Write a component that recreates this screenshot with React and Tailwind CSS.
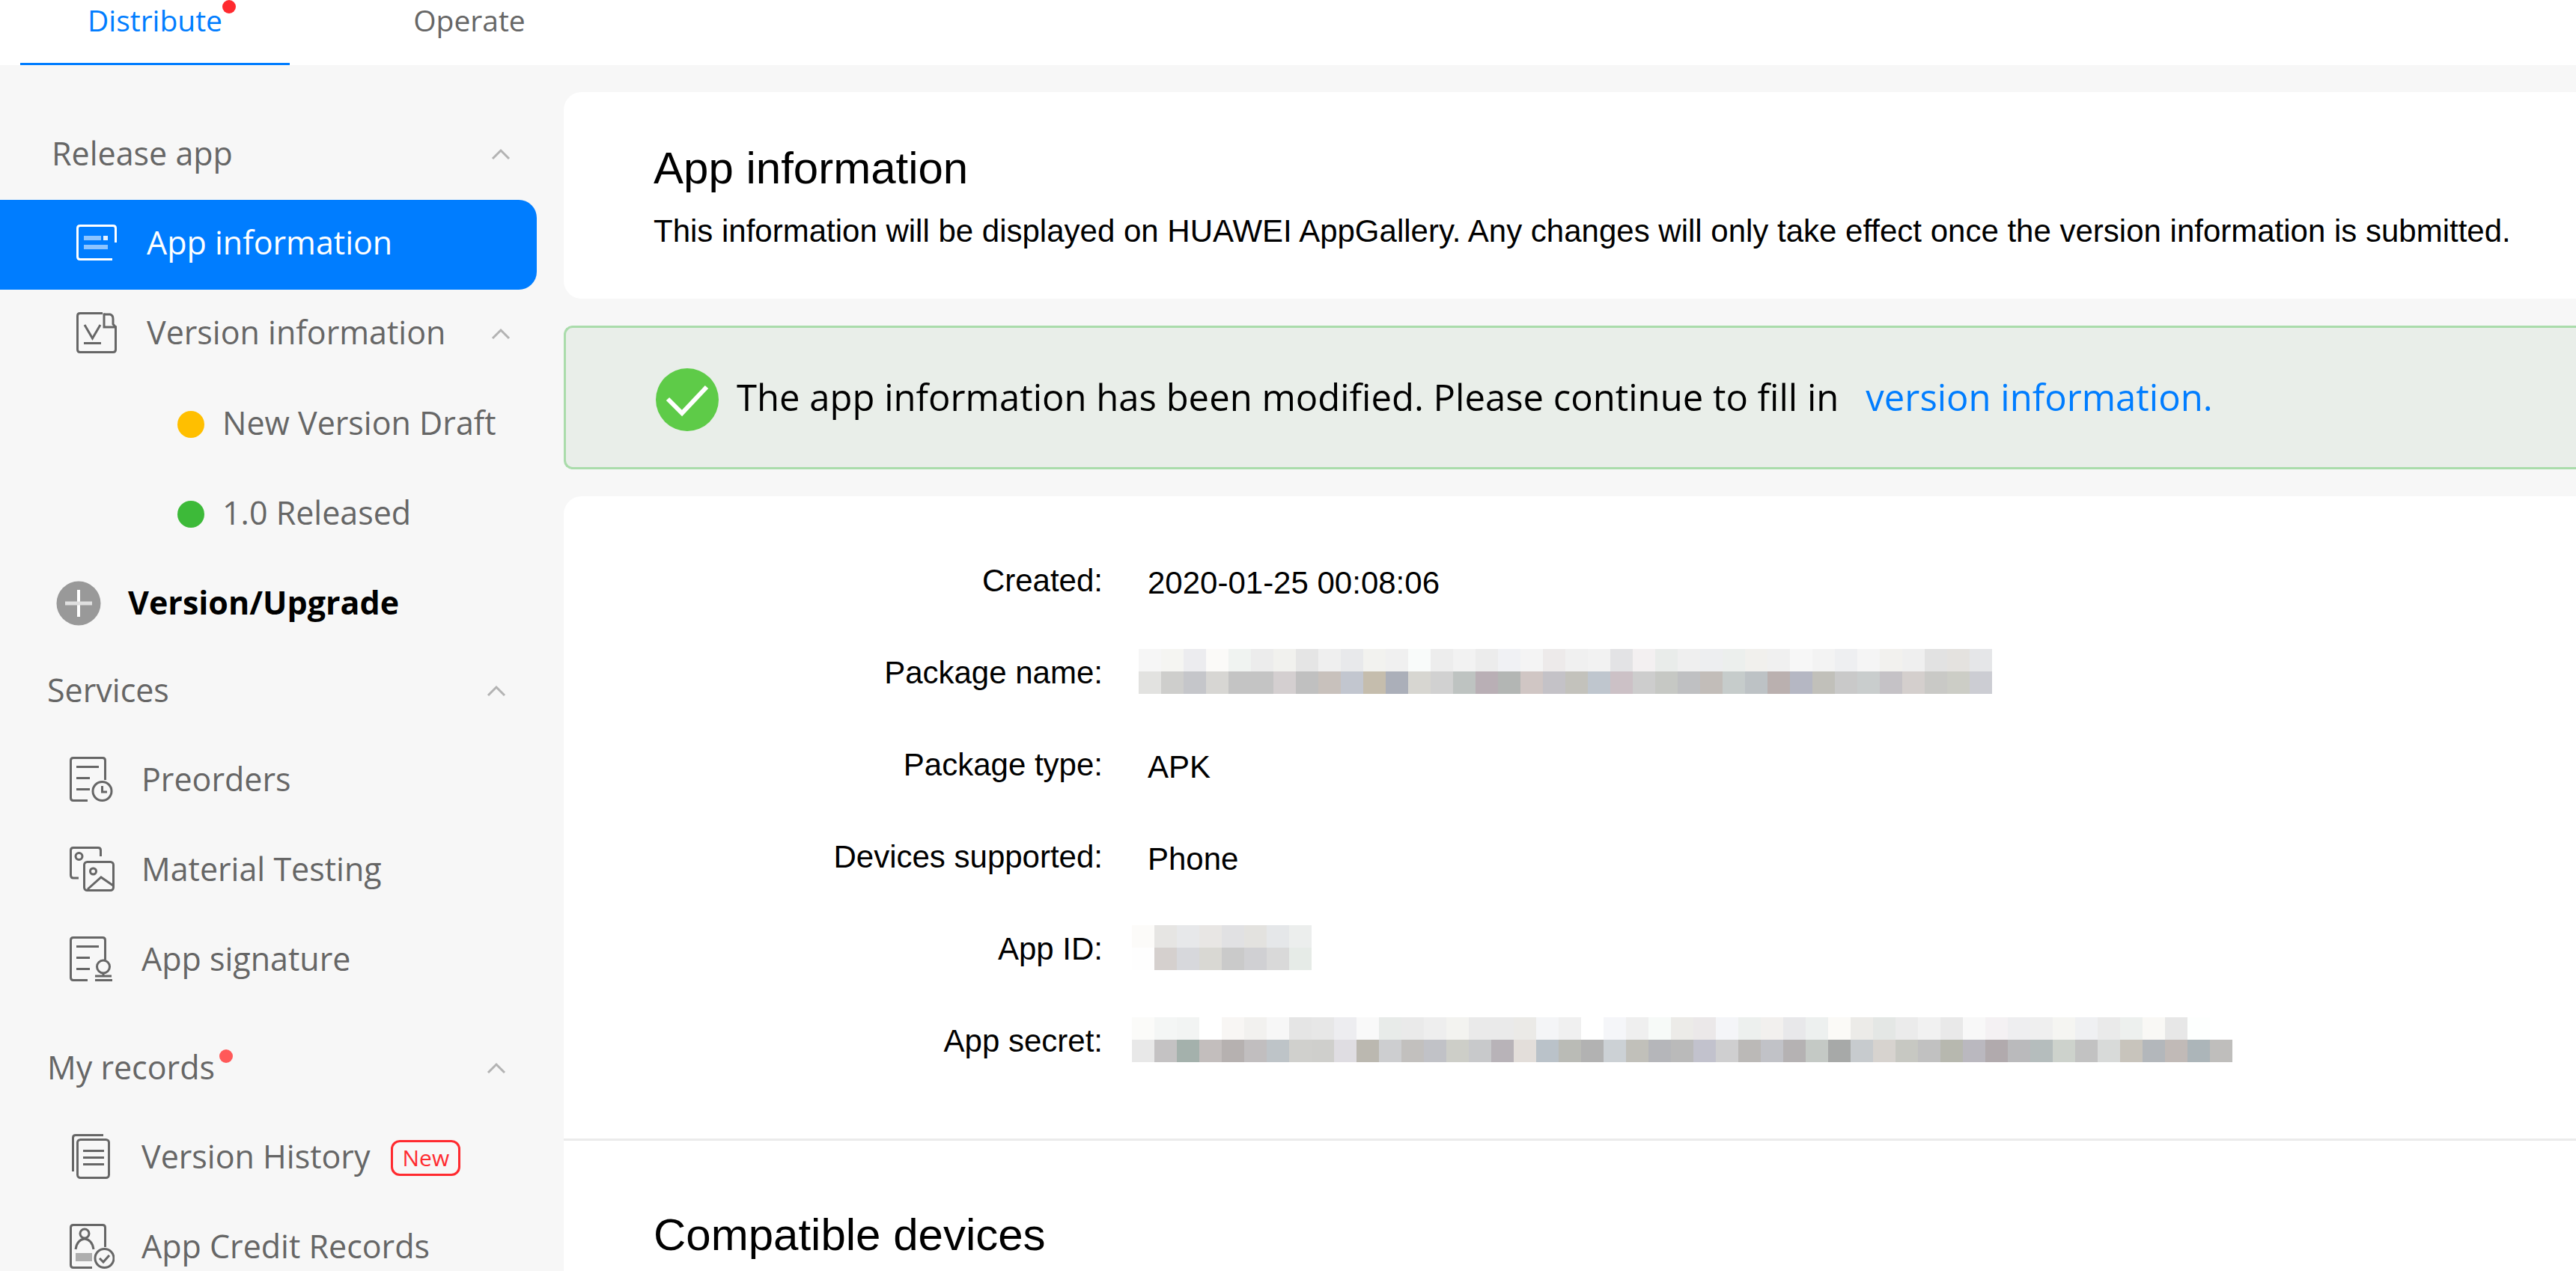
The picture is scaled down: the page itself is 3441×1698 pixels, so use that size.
const sans = "font-['Open_Sans','Noto_Sans',sans-serif]";

function Chevron() {
  return (
    <svg className="h-[30px] w-[30px] shrink-0" viewBox="0 0 30 30" fill="none" stroke="#b3b3b3" strokeWidth="3" aria-hidden="true">
      <path d="M4 20 L15 9 L26 20" />
    </svg>
  );
}

function Icon({ name }) {
  const doc = <path d="M24 58.5 H5 Q1.500 58.500 1.500 55 V5 Q1.500 1.500 5 1.500 H44 Q47.500 1.500 47.500 5 V31" />;
  const lines = <path d="M9 13.500 H39 M9 28.500 H27 M9 43.500 H27" />;
  const art = {
    info: (
      <>
        <path d="M48 52.500 H5 Q1.500 52.500 1.500 49 V11 Q1.500 7.500 5 7.500 H49 Q52.500 7.500 52.500 11 V30" />
        <path d="M10 24 H33 M10 36 H42" strokeWidth="6" opacity=".55" />
        <path d="M36 24 H42" strokeWidth="6" opacity=".9" />
      </>
    ),
    version: (
      <>
        <path d="M35 4.500 H5 Q1.500 4.500 1.500 8 V53 Q1.500 56.500 5 56.500 H49 Q52.500 56.500 52.500 53 V23 H37 V4.500" />
        <path d="M37 6 H45 Q49 7 49 12 V19 L52.500 23" />
        <path d="M11 20 L21.500 38 L32 20 M10 44.500 H33" />
      </>
    ),
    preorder: (
      <>
        {doc}
        {lines}
        <circle cx="43.500" cy="46" r="12.500" />
        <path d="M43.500 39 V47 H50" />
      </>
    ),
    material: (
      <>
        <path d="M12 42 H5 Q1.500 42 1.500 38 V5 Q1.500 1.500 5 1.500 H38 Q41.500 1.500 41.500 5 V13" />
        <circle cx="12.500" cy="13" r="4.500" />
        <rect x="19.500" y="20.500" width="39" height="38" rx="4" />
        <circle cx="31.500" cy="33" r="4" />
        <path d="M24 57 L42 41 L58 52" />
      </>
    ),
    signature: (
      <>
        {doc}
        {lines}
        <circle cx="45" cy="40.500" r="8.500" />
        <path d="M45 49 V53 M34 53 H56 M34 58.500 H57" />
      </>
    ),
    history: (
      <>
        <path d="M4.500 50 V5 Q4.500 1.500 8 1.500 H45" />
        <rect x="10.500" y="7.500" width="42" height="51" rx="4" />
        <path d="M18 22.500 H46 M18 31.500 H46 M18 40.500 H46" />
      </>
    ),
    credit: (
      <>
        <path d="M30 58.500 H5 Q1.500 58.500 1.500 55 V5 Q1.500 1.500 5 1.500 H44 Q47.500 1.500 47.500 5 V31" />
        <circle cx="20" cy="13" r="6" />
        <path d="M8 34 Q10 21 20 20 Q30 21 32 34" />
        <rect x="8" y="39" width="22" height="11" fill="currentColor" stroke="none" opacity=".5" />
        <circle cx="46.500" cy="46" r="12.500" />
        <path d="M40 46 L45 51 L53 42" />
      </>
    ),
  };
  return (
    <svg className="h-[60px] w-[60px] shrink-0" viewBox="0 0 60 60" fill="none" stroke="currentColor" strokeWidth="3" aria-hidden="true">
      {art[name]}
    </svg>
  );
}

function Group({ label, dot, className }) {
  return (
    <button type="button" className={`flex h-[120px] w-full items-center justify-between ${className}`}>
      <span className="relative pb-[3px]">
        {label}
        {dot && <span className="absolute top-2 -right-6 h-[18px] w-[18px] rounded-full bg-[#ff5959]" />}
      </span>
      <Chevron />
    </button>
  );
}

function Item({ icon, label, badge }) {
  return (
    <a href="#" className="flex h-[120px] items-center pb-1.5 pl-[93px]">
      <Icon name={icon} />
      <span className="ml-9">{label}</span>
      {badge && (
        <span className="mt-1 ml-7 flex h-12 items-center rounded-[12px] border-[3px] border-[#ff2a2f] px-3 text-[30px] leading-none text-[#ff2a2f]">
          {badge}
        </span>
      )}
    </a>
  );
}

function Status({ color, label }) {
  return (
    <a href="#" className="flex h-[120px] items-center gap-6 pl-[237px]">
      <span className={`h-9 w-9 rounded-full ${color}`} />
      <span className="pb-[3px]">{label}</span>
    </a>
  );
}

const packageTop = "f6f6f6 f5f5f2 ececef fbfaf8 f0f3f1 ececec f1f1ee e5e5e5 efefef e8e9eb f2f2ef f0f0f0 f9fbfa ededed f2f2f2 ececec f0f1f4 f4f4f4 edeaea f0f0f0 f2f2f2 e3e3e5 f3f0f1 e9ecea efefef edeef0 ecefed f1f0ed f0f0f0 f7f7f7 f3f3f3 eeeff1 f5f5f5 f2f1ee efefef e2e2e2 e4e2df e5e6e8";
const packageBottom = "e2e2e0 cececc c5c6ca d7d6d3 c4c4c4 c4c4c4 d4cfd0 c0c0c0 c8c1bc c2c6cf c5bdad abafb9 d7d6d1 d1d1d1 bec3c1 b9afb5 b3b6b4 d0c6c4 c4c2c7 c3c2bc bfc6ce ccc1c6 cdcdcd c6c8c4 bfc0c2 c2bdb9 c6cccb bdc2c5 bab0af b5b7c3 c1c0ba c9c9c9 c9cdcd c5c2c6 d4cfcd c9c9c6 cccdc6 cccdd3";
const idTop = "fcfbf9 e6e5e3 e7e8ea e8e6e4 e1e1e3 e3e2df e5e7e9 eceeed";
const idBottom = "fefefe d5d0ce d7d8dc d9d8d3 cacaca d0d0d3 d9d9d9 e6ebe7";
const secretTop = "fbfbf9 f4f6f5 f2f4f3 ffffff f8f6f4 f2f1ef f7f7f7 e5e5e5 e7e7e7 ededf0 f9f9f9 e8ebe9 eaeaea eeeeee f3f3f0 eaeaea eaeaea ebeae7 f4f5f7 f0f0f0 ffffff f5f6f9 efefef f7faf8 ecebe8 ebe8e9 f4f5f8 edf0ee f2f0ee e8e8ea edf0ef fbfaf7 ecebe8 e4e7e5 ebebeb f1f1f1 e9e9e9 f8f8f8 f4f1f3 eeeef0 efefef f5f5f2 eff0f2 eaeaea edf0ee f9f8f5 e7e7e7 fdfffe ffffff";
const secretBottom = "e8e8e8 c4c2c3 a4b1ac c3bebd b6b1b0 c1bebf bec4c8 d0d0cd cfcfcc dfdde2 bbb8b0 cdced0 c2c0be c1c2c7 cdcec8 c8c9cb b8b3b8 e3deda bac2c9 babbb6 b2b2b2 ccd1d5 c1c0ba b5b6ba bababa c2c2cd cfcfd0 bbb9b7 c1c2c7 b5b2b3 c4c9c5 a7a9a8 c7cbce d7d3cf c7c8c2 c1c1c1 b7b8af bab8bf b1aaad bababc b5bdbd cdd2cc c2c2c2 d8dad9 c8c4bc b3b7bb c1bab7 acb5b9 bfbebc";

function Mosaic({ rows, label }) {
  return (
    <div role="img" aria-label={label} className="flex flex-col pb-1">
      {rows.map((row, r) => (
        <div key={r} className="flex">
          {row.split(" ").map((c, i) => (
            <span key={i} className="h-[30px] w-[30px]" style={{ backgroundColor: `#${c}` }} />
          ))}
        </div>
      ))}
    </div>
  );
}

function Field({ label, children }) {
  return (
    <div className="flex h-[123px] items-center">
      <dt className="w-[720px] shrink-0 text-right">{label}</dt>
      <dd className="flex">{children}</dd>
    </div>
  );
}

export default function App() {
  return (
    <div className="h-screen overflow-hidden bg-[#f7f7f7] font-['Liberation_Sans',Arial,sans-serif] text-[42px] text-black">
      <nav className={`flex h-[87px] gap-[60px] bg-white pl-[27px] text-[39px] leading-[54px] text-[#666] ${sans}`}>
        <a href="#" className="flex w-[360px] justify-center border-b-[3px] border-[#007dff] text-[#007dff]">
          <span className="relative">
            Distribute
            <span className="absolute top-0 -right-[18px] h-[18px] w-[18px] rounded-full bg-[#ff2a2f]" />
          </span>
        </a>
        <a href="#" className="flex w-[360px] justify-center">Operate</a>
      </nav>

      <div className="flex items-start">
        <aside className={`w-[717px] shrink-0 pt-[60px] text-[43px] text-[#666] ${sans}`}>
          <Group label="Release app" className="pr-[33px] pl-[69px]" />
          <a href="#" className="flex h-[120px] items-center rounded-r-[24px] bg-[#007dff] pb-1.5 pl-[102px] text-white">
            <Icon name="info" />
            <span className="ml-[34px]">App information</span>
          </a>
          <button type="button" className="flex h-[120px] w-full items-center pr-[33px] pl-[102px]">
            <span className="mr-auto flex items-center pb-1.5">
              <Icon name="version" />
              <span className="ml-[34px]">Version information</span>
            </span>
            <Chevron />
          </button>
          <Status color="bg-[#ffbf00]" label="New Version Draft" />
          <Status color="bg-[#3dba39]" label="1.0 Released" />
          <button type="button" className="flex h-[117px] w-full items-center gap-9 pl-[75px] font-bold text-black">
            <svg className="h-[60px] w-[60px]" viewBox="0 0 60 60" aria-hidden="true">
              <circle cx="30" cy="30" r="29.500" fill="#999" />
              <path d="M30 12 V48" stroke="#fff" strokeWidth="4" />
              <path d="M12 30 H48" stroke="#e0e0e0" strokeWidth="5" />
            </svg>
            Version/Upgrade
          </button>
          <Group label="Services" className="pr-[39px] pl-[63px]" />
          <Item icon="preorder" label="Preorders" />
          <Item icon="material" label="Material Testing" />
          <Item icon="signature" label="App signature" />
          <div className="h-6" />
          <Group label="My records" dot className="pr-[39px] pl-[63px]" />
          <Item icon="history" label="Version History" badge="New" />
          <Item icon="credit" label="App Credit Records" />
        </aside>

        <main className="ml-9 flex min-w-0 flex-1 flex-col gap-9 pt-9">
          <section className="h-[276px] rounded-l-[24px] bg-white pt-[66px] pl-[120px]">
            <h1 className="text-[60px] leading-[72px]">App information</h1>
            <p className="mt-[18px] whitespace-nowrap leading-[60px]">
              This information will be displayed on HUAWEI AppGallery. Any changes will only take effect once the version information is submitted.
            </p>
          </section>

          <section role="status" className={`flex h-[192px] items-center rounded-l-[12px] border-[3px] border-r-0 border-[#aadcab] bg-[#e9eee9] pl-[120px] text-[49px] whitespace-nowrap ${sans}`}>
            <svg className="mt-1.5 h-[84px] w-[84px] shrink-0" viewBox="0 0 84 84" fill="none" aria-hidden="true">
              <circle cx="42" cy="42" r="42" fill="#5ecb48" />
              <path d="M16 41 L35 60 L68 25" stroke="#fff" strokeWidth="6" />
            </svg>
            <p className="ml-6">The app information has been modified. Please continue to fill in</p>
            <a href="#" className="ml-9 text-[#007dff]">version information.</a>
          </section>

          <section className="rounded-tl-[24px] bg-white">
            <dl className="border-b-[3px] border-[#ebebeb] pt-[51px] pb-[69px]">
              <Field label="Created:"><span className="pt-1.5 pl-[60px]">2020-01-25 00:08:06</span></Field>
              <Field label="Package name:"><div className="pl-12"><Mosaic label="Hidden package name" rows={[packageTop, packageBottom]} /></div></Field>
              <Field label="Package type:"><span className="pt-1.5 pl-[60px]">APK</span></Field>
              <Field label="Devices supported:"><span className="pt-1.5 pl-[60px]">Phone</span></Field>
              <Field label="App ID:"><div className="pl-[39px]"><Mosaic label="Hidden app ID" rows={[idTop, idBottom]} /></div></Field>
              <Field label="App secret:"><div className="pl-[39px]"><Mosaic label="Hidden app secret" rows={[secretTop, secretBottom]} /></div></Field>
            </dl>
            <h2 className="pt-[90px] pb-12 pl-[120px] text-[60px] leading-[72px]">Compatible devices</h2>
          </section>
        </main>
      </div>
    </div>
  );
}
